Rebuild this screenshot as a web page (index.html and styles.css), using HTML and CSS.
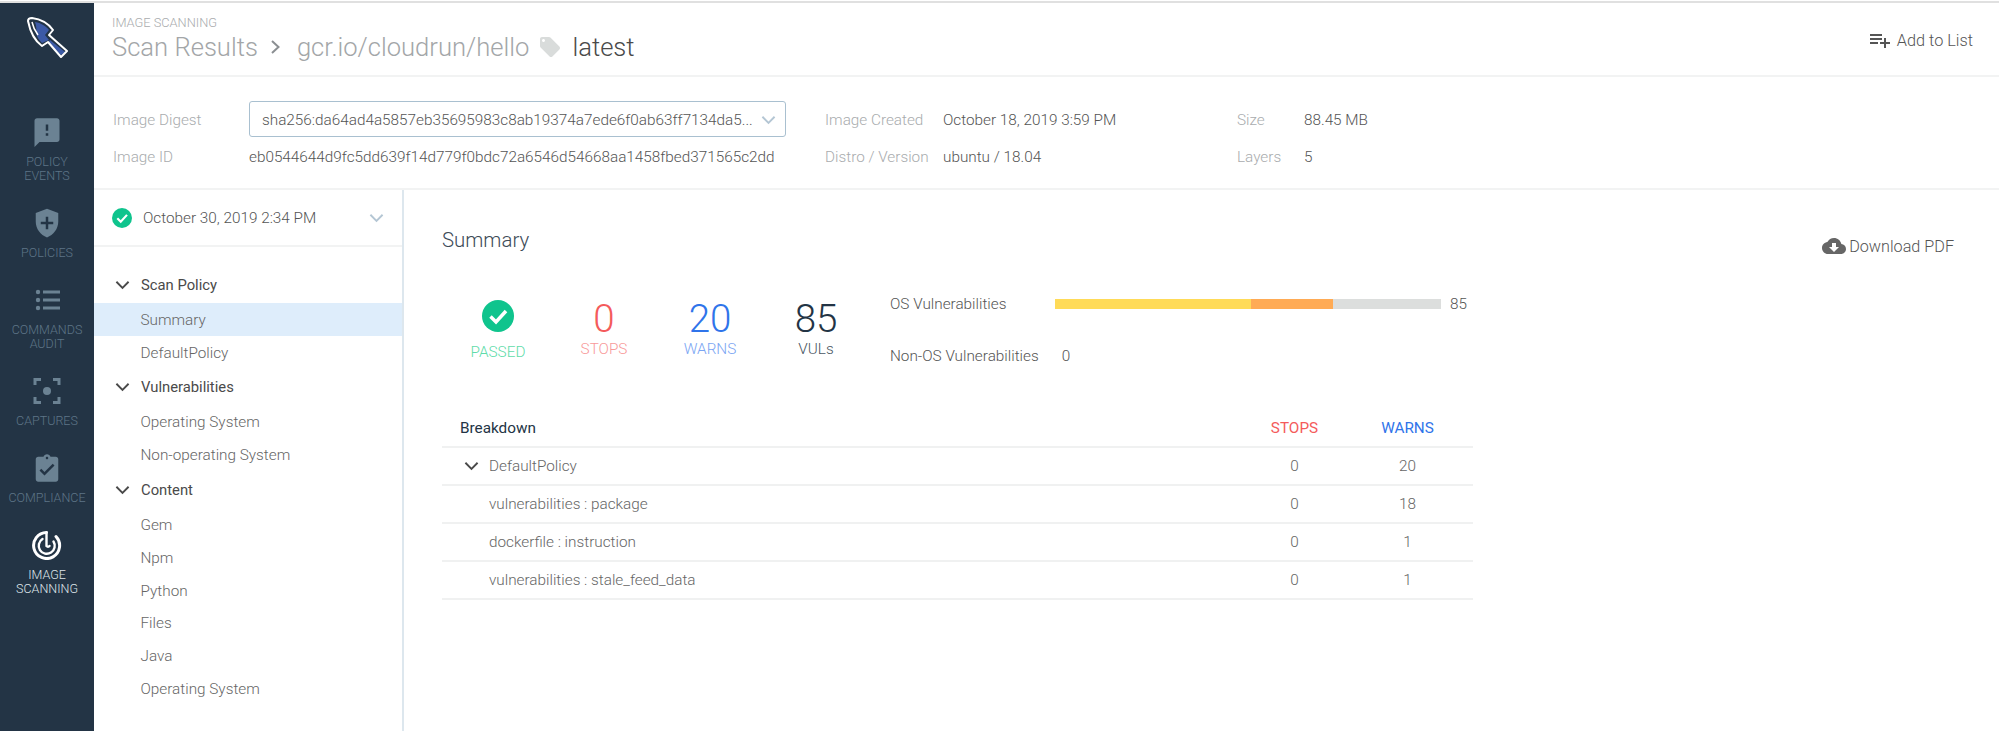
FILE: index.html
```html
<!DOCTYPE html>
<html lang="en">

<head>
    <meta charset="UTF-8">
    <title>Image Scanning - Scan Results</title>
    <link rel="stylesheet" href="styles.css">
</head>

<body>
    <div class="app">
        <!-- left nav -->
        <nav class="sidebar">
            <svg class="logo" viewBox="0 0 42 42">
                <path class="logo-blue" d="M9 6 C15 7 20 10 23 14 L19 19 L23 24 L16 27 C13 24 11 21 10 17 C11 14 10 9 9 6Z" />
                <path class="logo-blue" d="M24 24 L39 36 L35 39 L22 27Z" />
                <path class="logo-thin" d="M6 6 C7 11 9 15 12 19" />
                <path class="logo-line" d="M2 5 Q2 2 6 2 C14 3 22 7 27 14 L23 19 L41 35 L35 41 L22 26 L16 30 C9 25 4 15 2 5Z" />
            </svg>
            <a class="nav-item">
                <svg class="nav-icon" viewBox="0 0 24 24"><path d="M20 1H4C2.9 1 2 1.9 2 3L2 24l4-4h14c1.100 0 2-.9 2-2V3c0-1.100-.9-2-2-2zm-7 10h-2V6h2v5zm0 4h-2v-2h2v2z" /></svg>
                <span>POLICY<br>EVENTS</span>
            </a>
            <a class="nav-item">
                <svg class="nav-icon" viewBox="0 0 24 24"><path fill-rule="evenodd" d="M12 0.500L3 4v7c0 5.550 3.840 10.740 9 12.500 5.160-1.760 9-6.950 9-12.500V4zM11 7h2v4h4v2h-4v4h-2v-4H7v-2h4z" /></svg>
                <span>POLICIES</span>
            </a>
            <a class="nav-item">
                <svg class="nav-icon" viewBox="0 0 30 30">
                    <circle cx="6" cy="7" r="2.200" /><circle cx="6" cy="15" r="2.200" /><circle cx="6" cy="23" r="2.200" />
                    <rect x="11" y="5.500" width="17" height="3" /><rect x="11" y="13.500" width="17" height="3" /><rect x="11" y="21.500" width="17" height="3" />
                </svg>
                <span>COMMANDS<br>AUDIT</span>
            </a>
            <a class="nav-item">
                <svg class="nav-icon" viewBox="0 0 30 30">
                    <path class="nav-stroke" d="M3 9V3.500H9M21 3.500H27V9M27 21V26.500H21M9 26.500H3V21" />
                    <circle cx="15" cy="15" r="4" />
                </svg>
                <span>CAPTURES</span>
            </a>
            <a class="nav-item">
                <svg class="nav-icon" viewBox="0 0 24 24"><path d="M19 3h-4.180C14.400 1.840 13.300 1 12 1c-1.300 0-2.400.84-2.820 2H5c-1.100 0-2 .9-2 2v16c0 1.100.9 2 2 2h14c1.100 0 2-.9 2-2V5c0-1.100-.9-2-2-2zm-7 0c.55 0 1 .45 1 1s-.45 1-1 1-1-.45-1-1 .45-1 1-1zm-2 15l-4-4 1.410-1.410L10 15.170l6.590-6.590L18 10l-8 8z" /></svg>
                <span>COMPLIANCE</span>
            </a>
            <a class="nav-item active">
                <svg class="nav-icon" viewBox="0 0 30 30">
                    <path class="scan-ring" d="M24 6.500 A13 13 0 1 1 14.500 2.500" />
                    <path class="scan-ring thin" d="M14.500 2.500V16 A2 2 0 0 0 17.500 16" />
                    <path class="scan-ring thin" d="M10.500 9 A8 8 0 1 0 21.500 11.500" />
                </svg>
                <span>IMAGE<br>SCANNING</span>
            </a>
        </nav>

        <div class="page">
            <header class="topbar">
                <div>
                    <div class="crumb-small">IMAGE SCANNING</div>
                    <div class="crumbs">
                        <span>Scan Results</span>
                        <svg class="crumb-arrow" viewBox="0 0 12 16"><path d="M2 2l6.500 6L2 14" /></svg>
                        <span>gcr.io/cloudrun/hello</span>
                        <svg class="tag-icon" viewBox="0 0 24 24"><path d="M21.410 11.580l-9-9C12.050 2.220 11.550 2 11 2H4c-1.100 0-2 .9-2 2v7c0 .55.22 1.050.59 1.420l9 9c.36.36.86.58 1.410.58.55 0 1.050-.22 1.410-.59l7-7c.37-.36.59-.86.59-1.410 0-.55-.23-1.060-.59-1.420zM5.500 7C4.670 7 4 6.330 4 5.500S4.670 4 5.500 4 7 4.670 7 5.500 6.330 7 5.500 7z" /></svg>
                        <span class="crumb-tag">latest</span>
                    </div>
                </div>
                <a class="add-list">
                    <svg viewBox="0 0 24 24"><path d="M14 10H2v2h12v-2zm0-4H2v2h12V6zm4 8v-4h-2v4h-4v2h4v4h2v-4h4v-2h-4zM2 16h8v-2H2v2z" /></svg>
                    Add to List
                </a>
            </header>

            <section class="meta">
                <div class="meta-label">Image Digest</div>
                <div class="digest-select">
                    <span>sha256:da64ad4a5857eb35695983c8ab19374a7ede6f0ab63ff7134da5...</span>
                    <svg class="chevron soft" viewBox="0 0 16 10"><path d="M1.500 1.500L8 8l6.500-6.500" /></svg>
                </div>
                <div class="meta-label">Image Created</div>
                <div class="meta-value">October 18, 2019 3:59 PM</div>
                <div class="meta-label">Size</div>
                <div class="meta-value">88.45 MB</div>

                <div class="meta-label">Image ID</div>
                <div class="meta-value">eb0544644d9fc5dd639f14d779f0bdc72a6546d54668aa1458fbed371565c2dd</div>
                <div class="meta-label">Distro / Version</div>
                <div class="meta-value">ubuntu / 18.04</div>
                <div class="meta-label">Layers</div>
                <div class="meta-value">5</div>
            </section>

            <div class="content">
                <aside class="panel">
                    <div class="scan-date">
                        <svg class="check" viewBox="0 0 32 32"><circle cx="16" cy="16" r="16" /><path d="M8.500 16.500l5.500 5.500L24 11" /></svg>
                        <span>October 30, 2019 2:34 PM</span>
                        <svg class="chevron soft" viewBox="0 0 16 10"><path d="M1.500 1.500L8 8l6.500-6.500" /></svg>
                    </div>
                    <div class="tree">
                        <div class="tree-head first"><svg class="chevron" viewBox="0 0 16 10"><path d="M1.500 1.500L8 8l6.500-6.500" /></svg>Scan Policy</div>
                        <div class="tree-item selected">Summary</div>
                        <div class="tree-item">DefaultPolicy</div>
                        <div class="tree-head"><svg class="chevron" viewBox="0 0 16 10"><path d="M1.500 1.500L8 8l6.500-6.500" /></svg>Vulnerabilities</div>
                        <div class="tree-item">Operating System</div>
                        <div class="tree-item">Non-operating System</div>
                        <div class="tree-head"><svg class="chevron" viewBox="0 0 16 10"><path d="M1.500 1.500L8 8l6.500-6.500" /></svg>Content</div>
                        <div class="tree-item">Gem</div>
                        <div class="tree-item">Npm</div>
                        <div class="tree-item">Python</div>
                        <div class="tree-item">Files</div>
                        <div class="tree-item">Java</div>
                        <div class="tree-item">Operating System</div>
                    </div>
                </aside>

                <main class="summary">
                    <div class="summary-head">
                        <h2>Summary</h2>
                        <a class="download">
                            <svg viewBox="0 0 24 24"><path d="M19.350 10.040C18.670 6.590 15.640 4 12 4 9.110 4 6.600 5.640 5.350 8.040 2.340 8.360 0 10.910 0 14c0 3.310 2.690 6 6 6h13c2.760 0 5-2.240 5-5 0-2.640-2.050-4.780-4.650-4.960zM17 13l-5 5-5-5h3V9h4v4h3z" /></svg>
                            Download PDF
                        </a>
                    </div>

                    <div class="overview">
                        <div class="stat passed">
                            <svg class="check" viewBox="0 0 32 32"><circle cx="16" cy="16" r="16" /><path d="M8.500 16.500l5.500 5.500L24 11" /></svg>
                            <div class="stat-label">PASSED</div>
                        </div>
                        <div class="stat stops">
                            <div class="stat-num">0</div>
                            <div class="stat-label">STOPS</div>
                        </div>
                        <div class="stat warns">
                            <div class="stat-num">20</div>
                            <div class="stat-label">WARNS</div>
                        </div>
                        <div class="stat vuls">
                            <div class="stat-num">85</div>
                            <div class="stat-label">VULs</div>
                        </div>

                        <div class="vuln-bars">
                            <div class="vuln-row">
                                <span class="vuln-name fixed">OS Vulnerabilities</span>
                                <div class="bar">
                                    <div class="bar-fill medium" style="width: 196px"></div>
                                    <div class="bar-fill high" style="width: 82px"></div>
                                </div>
                                <span class="vuln-count">85</span>
                            </div>
                            <div class="vuln-row">
                                <span class="vuln-name">Non-OS Vulnerabilities</span>
                                <span class="vuln-count">0</span>
                            </div>
                        </div>
                    </div>

                    <div class="breakdown">
                        <div class="bd-row bd-header">
                            <div>Breakdown</div>
                            <div class="bd-num stops">STOPS</div>
                            <div class="bd-num warns">WARNS</div>
                        </div>
                        <div class="bd-row">
                            <div class="bd-name"><svg class="chevron" viewBox="0 0 16 10"><path d="M1.500 1.500L8 8l6.500-6.500" /></svg>DefaultPolicy</div>
                            <div class="bd-num">0</div>
                            <div class="bd-num">20</div>
                        </div>
                        <div class="bd-row">
                            <div class="bd-name">vulnerabilities : package</div>
                            <div class="bd-num">0</div>
                            <div class="bd-num">18</div>
                        </div>
                        <div class="bd-row">
                            <div class="bd-name">dockerfile : instruction</div>
                            <div class="bd-num">0</div>
                            <div class="bd-num">1</div>
                        </div>
                        <div class="bd-row">
                            <div class="bd-name">vulnerabilities : stale_feed_data</div>
                            <div class="bd-num">0</div>
                            <div class="bd-num">1</div>
                        </div>
                    </div>
                </main>
            </div>
        </div>
    </div>
</body>

</html>
```

FILE: styles.css
```css
* {
    margin: 0;
    padding: 0;
    box-sizing: border-box
}

body {
    font-family: Roboto, 'Liberation Sans', sans-serif;
    font-weight: 300;
    font-size: 15.3px;
    color: #555;
    background: #fff;
    padding-top: 1px;
    height: 731px;
    overflow: hidden
}

.app {
    display: flex;
    height: 730px;
    border-top: 2px solid #e0e0e0
}

/* sidebar */
.sidebar {
    width: 94px;
    flex: none;
    background: #233445;
    display: flex;
    flex-direction: column;
    align-items: center;
    padding-top: 13px
}

.logo {
    width: 42px;
    height: 42px;
    margin-bottom: 59px
}

.logo-blue {
    fill: #3c5aa6
}

.logo-line {
    fill: none;
    stroke: #fff;
    stroke-width: 2;
    stroke-linejoin: round
}

.logo-thin {
    fill: none;
    stroke: #fff;
    stroke-width: 1.500
}

.nav-item {
    display: flex;
    flex-direction: column;
    align-items: center;
    margin-bottom: 25px;
    color: #5e7487;
    font-size: 12.5px;
    line-height: 14px;
    text-align: center
}

.nav-icon {
    width: 30px;
    height: 30px;
    margin-bottom: 8px;
    fill: #6b8293
}

.nav-stroke {
    fill: none;
    stroke: #6b8293;
    stroke-width: 3
}

.nav-item.active {
    color: #dfe5ea
}

.scan-ring {
    fill: none;
    stroke: #fff;
    stroke-width: 3;
    stroke-linecap: round
}

.scan-ring.thin {
    stroke-width: 2.400
}

/* header */
.page {
    flex: 1;
    min-width: 0;
    display: flex;
    flex-direction: column
}

.topbar {
    height: 74px;
    flex: none;
    display: flex;
    justify-content: space-between;
    align-items: flex-start;
    padding: 12px 26px 0 18px;
    border-bottom: 2px solid #f2f3f3
}

.crumb-small {
    font-size: 12.800px;
    line-height: 16px;
    color: #a9acae
}

.crumbs {
    display: flex;
    align-items: center;
    font-size: 25.600px;
    line-height: 32px;
    color: #a3a6a8
}

.crumb-arrow {
    width: 12px;
    height: 16px;
    margin: 0 15px 0 12px;
    fill: none;
    stroke: #8b8f92;
    stroke-width: 2
}

.tag-icon {
    width: 24px;
    height: 24px;
    margin: 0 10px 0 9px;
    fill: #d9dcdb
}

.crumb-tag {
    color: #4a4a4a
}

.add-list {
    display: flex;
    align-items: center;
    gap: 5px;
    margin-top: 13px;
    font-size: 16.300px;
    color: #555
}

.add-list svg {
    width: 24px;
    height: 24px;
    fill: #555
}

/* image details */
.meta {
    height: 113px;
    flex: none;
    display: grid;
    grid-template-columns: 136px 576px 118px 294px 67px 1fr;
    grid-template-rows: 36px 20px;
    row-gap: 9px;
    align-items: center;
    padding: 24px 0 0 19px;
    border-bottom: 2px solid #f2f3f3
}

.meta-label {
    color: #a9acae;
    padding-top: 1px
}

.meta-value {
    color: #555;
    padding-top: 1px
}

.digest-select {
    width: 537px;
    height: 36px;
    display: flex;
    justify-content: space-between;
    align-items: center;
    padding: 1px 9px 0 12px;
    border: 1px solid #a9c0d0;
    border-radius: 3px;
    color: #555;
    white-space: nowrap
}

.chevron {
    width: 15px;
    height: 10px;
    flex: none;
    fill: none;
    stroke: #4a4a4a;
    stroke-width: 2
}

.chevron.soft {
    stroke: #b4c6d4
}

/* left panel */
.content {
    flex: 1;
    display: flex;
    min-height: 0
}

.panel {
    width: 310px;
    flex: none;
    border-right: 2px solid #dde7ee
}

.scan-date {
    height: 57px;
    display: flex;
    align-items: center;
    padding: 0 18px 0 18px;
    border-bottom: 2px solid #f2f3f3;
    color: #555
}

.scan-date .check {
    width: 20px;
    height: 20px;
    margin-right: 11px
}

.scan-date .chevron {
    margin-left: auto
}

.check circle {
    fill: #0fc48d
}

.check path {
    fill: none;
    stroke: #fff;
    stroke-width: 3.500
}

.tree {
    padding-top: 19px
}

.tree-head {
    height: 35px;
    display: flex;
    align-items: center;
    margin: 1px 0;
    padding-left: 21px;
    color: #4a4a4a;
    font-weight: 400;
    font-size: 14.800px
}

.tree-head.first {
    margin: 0 0 2px;
    padding-top: 2px
}

.tree-head .chevron {
    margin-right: 11px
}

.tree-item {
    height: 32.800px;
    display: flex;
    align-items: center;
    padding: 1px 0 0 46.500px;
    color: #666
}

.tree-item.selected {
    background: #deedfb
}

/* summary */
.summary {
    flex: 1;
    min-width: 0;
    padding: 0 45px 0 38px
}

.summary-head {
    display: flex;
    justify-content: space-between;
    padding-top: 37px
}

.summary-head h2 {
    font-size: 20.400px;
    line-height: 26px;
    font-weight: 300;
    color: #3d4b58
}

.download {
    display: flex;
    align-items: center;
    gap: 3px;
    margin-top: 6px;
    height: 26px;
    font-size: 16.200px;
    color: #555
}

.download svg {
    width: 24px;
    height: 24px;
    fill: #666
}

.overview {
    display: flex;
    margin-top: 39px;
    height: 112px
}

.stat {
    width: 106px;
    text-align: center
}

.stat:first-child {
    margin-left: 3px
}

.stat-num {
    font-size: 38.500px;
    line-height: 40px;
    margin-top: 1px
}

.stat-label {
    font-size: 15.300px;
    line-height: 20px;
    margin-top: 0
}

.stat .check {
    width: 32px;
    height: 32px;
    display: block;
    margin: 2px auto 0
}

.passed .stat-label {
    color: #5fdcaa;
    margin-top: 10px
}

.stops,
.stops .stat-num {
    color: #f45b5b
}

.stops .stat-label {
    color: #f89a9a
}

.warns,
.warns .stat-num {
    color: #2f74ea
}

.warns .stat-label {
    color: #7aa5f3
}

.vuls .stat-num {
    color: #233445
}

.vuls .stat-label {
    color: #4a5763
}

.vuln-bars {
    margin-left: 21px;
    margin-top: -4px
}

.vuln-row {
    display: flex;
    align-items: center;
    height: 20px;
    margin-bottom: 32px;
    color: #555;
    white-space: nowrap
}

.vuln-name.fixed {
    width: 165px
}

.vuln-row .vuln-name:not(.fixed) {
    margin-right: 23px
}

.bar {
    width: 386px;
    height: 10px;
    display: flex;
    margin-right: 9px;
    background: #dcdedd
}

.bar-fill.medium {
    background: #ffdb58
}

.bar-fill.high {
    background: #ffab55
}

/* breakdown table */
.breakdown {
    width: 1031px
}

.bd-row {
    display: grid;
    grid-template-columns: 1fr 113px 113px;
    padding-right: 9px;
    height: 38px;
    align-items: center;
    border-bottom: 2px solid #f0f1f1;
    color: #666
}

.bd-header {
    padding-left: 18px;
    color: #233445;
    font-weight: 400
}

.bd-name {
    display: flex;
    align-items: center;
    padding-left: 47px
}

.bd-name .chevron {
    margin-left: -25px;
    margin-right: 10px
}

.bd-num {
    text-align: center
}

.bd-num.stops {
    color: #f45b5b
}

.bd-num.warns {
    color: #2f74ea
}
```
